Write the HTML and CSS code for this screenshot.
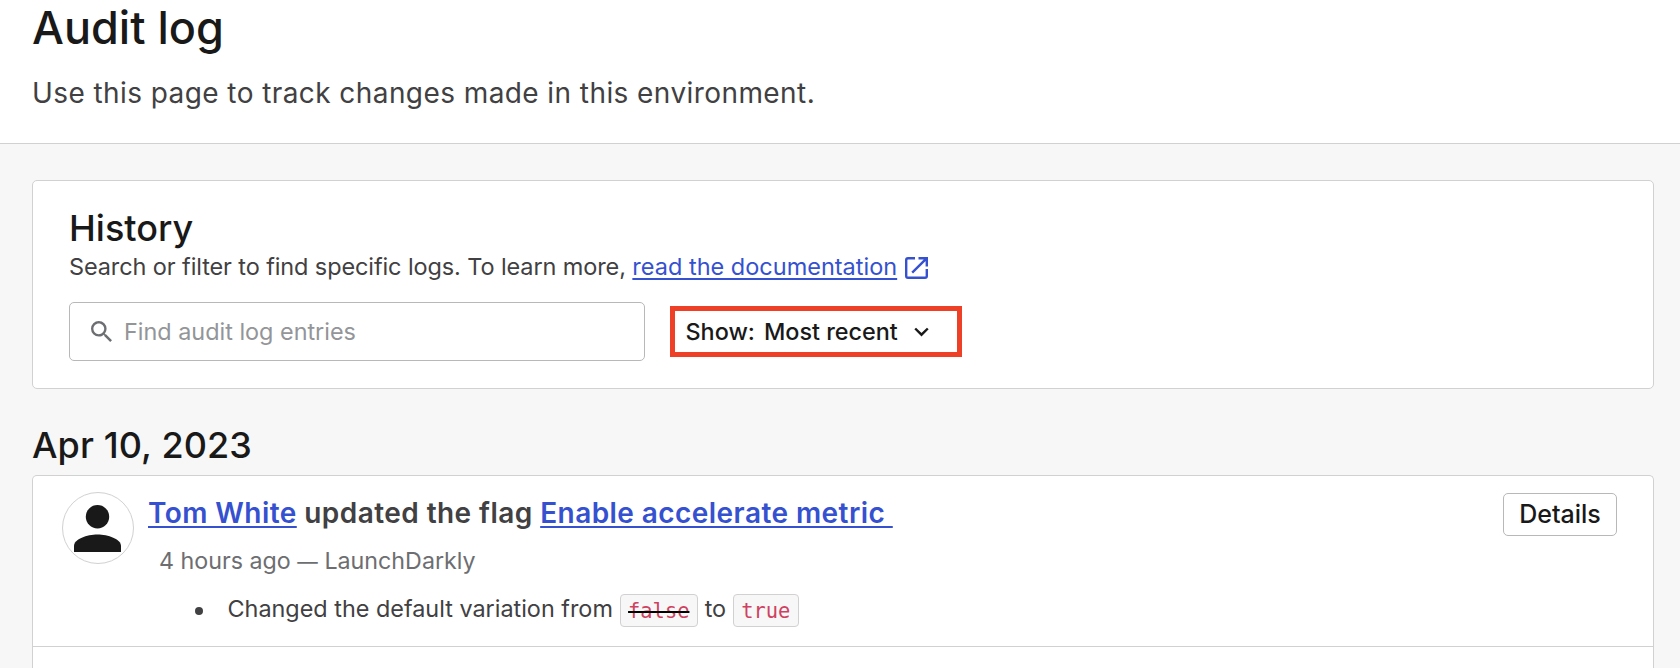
FILE: index.html
```html
<!DOCTYPE html>
<html lang="en">
<head>
<meta charset="utf-8">
<title>Audit log</title>
<link rel="stylesheet" href="styles.css">
</head>
<body>
<header class="page-header">
  <h1 class="page-title"><span>Audit log</span></h1>
  <p class="page-subtitle"><span>Use this page to track changes made in this environment.</span></p>
</header>
<main class="content">
  <section class="history">
    <h2 class="history-title"><span>History</span></h2>
    <p class="history-help"><span class="help-text">Search or filter to find specific logs. To learn more, </span><a class="link" href="#">read the documentation</a><svg class="external" viewBox="0 0 23 22" width="23" height="22" fill="none" stroke="currentColor" stroke-width="2.4"><path d="M10 1.200H3Q1.200 1.200 1.200 3V19Q1.200 20.800 3 20.800H20Q21.800 20.800 21.800 19V12M13.500 1.200H21.800V9.500M21.300 1.700L7.200 15.600"/></svg></p>
    <div class="filters">
      <label class="search">
        <svg class="search-icon" viewBox="3 3 17.500 17.500" width="21" height="21" fill="currentColor"><path d="M15.500 14h-.790l-.280-.270A6.471 6.471 0 0 0 16 9.500 6.500 6.500 0 1 0 9.500 16c1.610 0 3.090-.590 4.230-1.570l.270.280v.790l5 4.990L20.490 19l-4.990-5zm-6 0C7.010 14 5 11.990 5 9.500S7.010 5 9.500 5 14 7.010 14 9.500 11.990 14 9.500 14z"/></svg>
        <input class="search-input" type="text" placeholder="Find audit log entries">
      </label>
      <button class="sort" type="button"><span class="sort-label">Show:</span><span class="sort-value">Most recent</span><svg class="chevron" viewBox="0 0 15 10" width="15" height="10" fill="none" stroke="currentColor" stroke-width="2.400"><path d="M1.200 1.500L7.500 7.700L13.800 1.500"/></svg></button>
    </div>
  </section>
  <h2 class="date"><span>Apr 10, 2023</span></h2>
  <section class="entries">
    <article class="entry">
      <div class="avatar"><svg viewBox="0 0 47 47" width="47" height="47" fill="currentColor"><circle cx="23.500" cy="11.700" r="11.700"/><path d="M0 47V41C0 34 13 29.500 23.500 29.500S47 34 47 41V47Z"/></svg></div>
      <div class="entry-body">
        <h3 class="entry-title"><a class="link" href="#">Tom White</a><span class="action"> updated the flag </span><a class="link" href="#">Enable accelerate metric </a></h3>
        <p class="meta">4 hours ago <span class="dash">—</span> LaunchDarkly</p>
        <ul class="changes"><li class="change"><span class="change-text">Changed the default variation from</span><code class="chip removed"><span>false</span></code><span class="to">to</span><code class="chip"><span>true</span></code></li></ul>
      </div>
      <button class="details" type="button"><span>Details</span></button>
    </article>
    <div class="next-entry"></div>
  </section>
</main>
</body>
</html>
```
FILE: styles.css
```css
* { box-sizing: border-box; }
body {
  display: flex;
  flex-direction: column;
  margin: 0;
  height: 668px;
  overflow: hidden;
  background: #f7f7f7;
  color: #414042;
  font-family: Inter, "Liberation Sans", sans-serif;
}
h1, h2, h3, p, ul { margin: 0; padding: 0; font-weight: 400; white-space: pre; }
button, input { font: inherit; }
.page-header {
  flex: none;
  height: 144px;
  padding-left: 32px;
  background: #fff;
  border-bottom: 1px solid #d1d1d1;
}
.page-title { color: #191919; font-size: 45px; font-weight: 500; line-height: 56px; }
.page-subtitle { margin-top: 16px; font-size: 28px; line-height: 42px; letter-spacing: 0.420px; }
.content { display: flex; flex: 1; flex-direction: column; min-height: 0; padding: 36px 26px 0 32px; }
.history {
  flex: none;
  height: 209px;
  padding: 31px 36px 0;
  background: #fff;
  border: 1px solid #d1d1d1;
  border-radius: 5px;
}
.history-title { color: #191919; font-size: 36px; font-weight: 500; line-height: 32px; }
.history-help { display: flex; align-items: center; margin-top: 6px; font-size: 23.500px; line-height: 34px; }
.help-text { letter-spacing: -0.110px; }
.link {
  color: #3551d0;
  text-decoration: underline;
  text-decoration-thickness: 2px;
  text-underline-offset: 2.500px;
  text-decoration-skip-ink: none;
}
.external { margin: 2px 0 0 8px; color: #3551d0; }
.filters { display: flex; align-items: center; margin-top: 18px; }
.search {
  display: flex;
  align-items: center;
  width: 576px;
  height: 59px;
  padding-left: 21px;
  border: 1px solid #b8b8b8;
  border-radius: 5px;
}
.search-icon { color: #6d6e71; }
.search-input { width: 480px; padding: 0; margin-left: 12px; border: 0; outline: 0; background: none; font-size: 23.400px; }
.search-input::placeholder { color: #939598; opacity: 1; }
.sort {
  display: flex;
  align-items: center;
  width: 292px;
  height: 51px;
  margin-left: 25px;
  padding: 0 0 0 10.500px;
  border: 5px solid #ee4026;
  background: #fff;
  color: #191919;
  font-size: 23.400px;
  font-weight: 500;
}
.sort-value { margin-left: 9px; }
.chevron { margin-left: 16.500px; }
.date { flex: none; margin-top: 36px; color: #191919; font-size: 36px; font-weight: 500; line-height: 40px; letter-spacing: 0.100px; }
.entries {
  display: flex;
  flex: 1;
  flex-direction: column;
  min-height: 0;
  margin-top: 10px;
  background: #fff;
  border: 1px solid #d1d1d1;
  border-bottom: 0;
  border-radius: 5px 5px 0 0;
}
.entry { display: flex; flex: none; height: 171px; padding: 16px 36px 0 29px; border-bottom: 1px solid #d1d1d1; }
.next-entry { flex: 1; }
.avatar {
  display: flex;
  justify-content: center;
  width: 72px;
  height: 72px;
  padding: 11.500px 0.500px 0 0;
  border: 1px solid #d1d1d1;
  border-radius: 50%;
  color: #191919;
}
.entry-body { flex: 1; padding-left: 14px; }
.entry-title { font-size: 28px; font-weight: 600; line-height: 42px; letter-spacing: 0.440px; }
.meta { margin-top: 10px; padding-left: 11px; color: #6d6e71; font-size: 23.250px; line-height: 34px; }
.dash { font-size: 20.500px; }
.changes { margin-top: 14px; padding-left: 47px; list-style: none; }
.change { display: flex; align-items: center; font-size: 23.400px; line-height: 34px; }
.change::before { content: ""; width: 8px; height: 8px; margin: 1px 24.500px 0 0; border-radius: 50%; background: #414042; }
.change-text, .to { margin-top: -2px; }
.chip {
  height: 33px;
  margin: 1px 0 0 7px;
  padding: 0 7.200px;
  border: 1px solid #d1d1d1;
  border-radius: 4px;
  background: #f7f7f7;
  color: #cf4160;
  font: 20.400px/32px "DejaVu Sans Mono", monospace;
}
.removed { text-decoration: line-through #000 2px; }
.to { margin-left: 7px; }
.details {
  width: 114px;
  height: 43px;
  margin-top: 1px;
  padding: 0 0 1px;
  border: 1px solid #b8b8b8;
  border-radius: 5px;
  background: #fff;
  color: #191919;
  font-size: 25px;
  font-weight: 500;
}
```
